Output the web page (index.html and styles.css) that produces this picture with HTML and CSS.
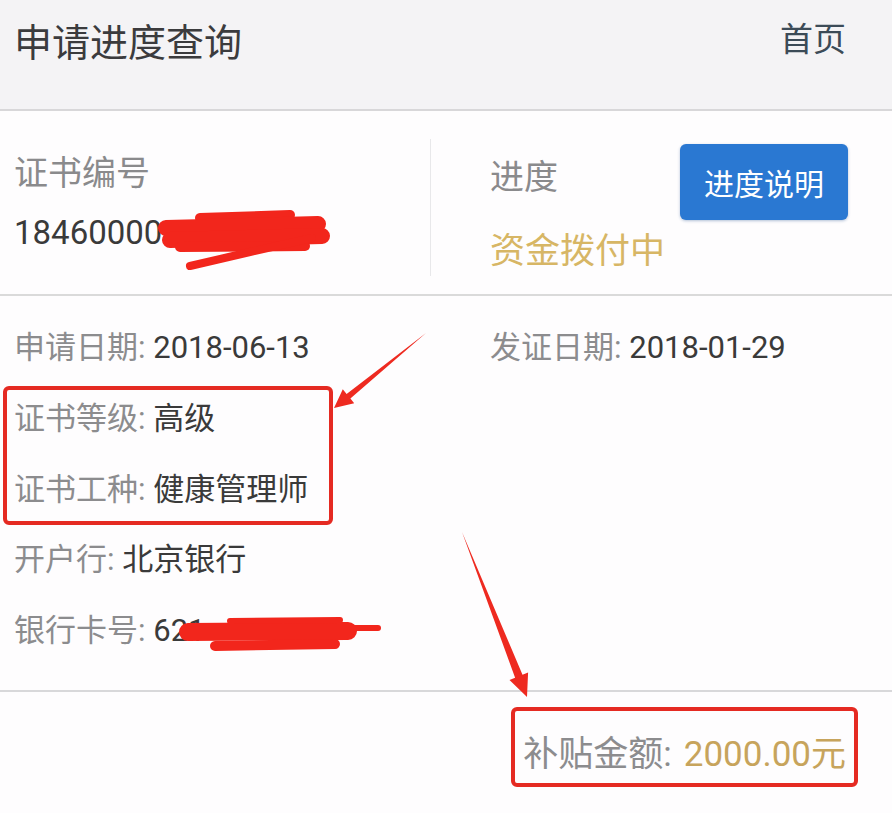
FILE: index.html
```html
<!DOCTYPE html>
<html lang="zh-CN">
<head>
  <meta charset="UTF-8">
  <title>申请进度查询</title>
  <meta name="viewport" content="width=device-width,initial-scale=1">
  <link rel="stylesheet" href="styles.css">
</head>
<body>
  <div class="page">
    <header class="topbar">
      <h1 class="topbar-title">申请进度查询</h1>
      <a class="topbar-link" href="#">首页</a>
    </header>

    <section class="cert">
      <div class="cert-col cert-left">
        <div class="cert-label">证书编号</div>
        <div class="cert-number">18460000<span class="masked">0</span></div>
      </div>
      <div class="cert-col cert-right">
        <div class="cert-progress">
          <div class="cert-label">进度</div>
          <div class="cert-status">资金拨付中</div>
        </div>
        <button class="btn-help">进度说明</button>
      </div>
    </section>

    <section class="details">
      <div class="row"><span class="lbl">申请日期:</span> <span class="val">2018-06-13</span></div>
      <div class="row"><span class="lbl">发证日期:</span> <span class="val">2018-01-29</span></div>
      <div class="row"><span class="lbl">证书等级:</span> <span class="val">高级</span></div>
      <div class="row"></div>
      <div class="row"><span class="lbl">证书工种:</span> <span class="val">健康管理师</span></div>
      <div class="row"></div>
      <div class="row"><span class="lbl">开户行:</span> <span class="val">北京银行</span></div>
      <div class="row"></div>
      <div class="row"><span class="lbl">银行卡号:</span> <span class="val">621</span></div>
    </section>

    <section class="amount">
      <span class="lbl">补贴金额:</span> <span class="money">2000.00元</span>
    </section>

    <!-- hand-drawn marks on top of the page -->
    <svg class="marks" width="892" height="813" viewBox="0 0 892 813">
      <g fill="none" stroke="#f2261c" stroke-linecap="round" stroke-linejoin="round">
        <path d="M200 218 L290 215" stroke-width="10"/>
        <path d="M166 228 L318 224" stroke-width="16"/>
        <path d="M170 240 L322 236" stroke-width="16"/>
        <path d="M180 247 L305 246" stroke-width="10"/>
        <path d="M190 266 L250 252 L312 238" stroke-width="8"/>
        <path d="M190 628 L378 628" stroke-width="6"/>
        <path d="M188 632 L348 631" stroke-width="18"/>
        <path d="M215 646 L335 644" stroke-width="10"/>
        <path d="M230 621 L340 620" stroke-width="6"/>
      </g>
      <g fill="none" stroke="#e52a22" stroke-width="4">
        <rect x="5" y="388" width="326" height="135" rx="4"/>
        <rect x="513" y="709" width="343" height="76" rx="4"/>
      </g>
      <g fill="#ee2a20">
        <polygon points="426,333 350.4,398.5 354.2,403.2 334,408 342.8,389.2 346.6,393.9"/>
        <polygon points="462,532 522.5,674.7 528.1,672.5 527,697 509.5,679.9 515.1,677.7"/>
      </g>
    </svg>
  </div>
</body>
</html>
```

FILE: styles.css
```css
body {
  margin: 0;
  background: #fefdfe;
  font-family: Roboto, "Noto Sans CJK SC", sans-serif;
  color: #3a3a3a;
}
.page {
  position: relative;
  width: 892px;
  height: 813px;
  overflow: hidden;
}
.topbar {
  height: 109px;
  background: #f4f3f5;
  border-bottom: 2px solid #d8d7d9;
  display: flex;
  align-items: flex-start;
  justify-content: space-between;
  padding: 0 46px 0 14px;
}
.topbar-title {
  margin: 20px 0 0;
  font-size: 38px;
  font-weight: normal;
  line-height: 46px;
  color: #3b3b3d;
}
.topbar-link {
  margin-top: 17px;
  font-size: 33px;
  line-height: 46px;
  color: #3c4b57;
  text-decoration: none;
}

/* certificate number + progress */
.cert {
  height: 183px;
  display: flex;
  border-bottom: 2px solid #dadada;
}
.cert-col {
  box-sizing: border-box;
}
.cert-left {
  width: 431px;
  margin: 28px 0 18px;
  padding: 29px 0 0 14px;
  border-right: 1px solid #e8e8ea;
}
.cert-right {
  flex: 1;
  display: flex;
  justify-content: space-between;
  padding: 34px 44px 0 59px;
}
.cert-label {
  font-size: 34px;
  line-height: 40px;
  color: #8a8a8c;
}
.cert-left .cert-label {
  margin-top: -15px;
}
.cert-right .cert-label {
  margin-top: 12px;
}
.cert-number {
  margin-top: 20px;
  font-size: 33px;
  line-height: 40px;
  color: #3a3a3a;
}
.cert-status {
  margin-top: 35px;
  font-size: 35px;
  line-height: 40px;
  color: #d7b665;
}
.btn-help {
  align-self: flex-start;
  margin-top: -1px;
  width: 168px;
  height: 76px;
  border: none;
  border-radius: 6px;
  background: #2a78d2;
  color: #fff;
  font-family: inherit;
  font-size: 30px;
  box-shadow: 0 1px 3px #1a4c8a55;
}
.masked {
  color: #555;
}

/* detail rows */
.details {
  height: 396px;
  box-sizing: border-box;
  border-bottom: 2px solid #d8d8da;
  padding: 17px 0 0 14px;
  display: grid;
  grid-template-columns: 476px 1fr;
  grid-auto-rows: 70.8px;
}
.row {
  font-size: 31px;
  line-height: 70px;
  white-space: nowrap;
}
.lbl {
  color: #8c8c8e;
}
.val {
  color: #3a3a3a;
}

/* subsidy amount */
.amount {
  display: flex;
  justify-content: flex-end;
  align-items: center;
  gap: 12px;
  height: 116px;
  padding-right: 46px;
  font-size: 35px;
}
.money {
  color: #c7a45c;
}

.marks {
  position: absolute;
  left: 0;
  top: 0;
  pointer-events: none;
}
```
